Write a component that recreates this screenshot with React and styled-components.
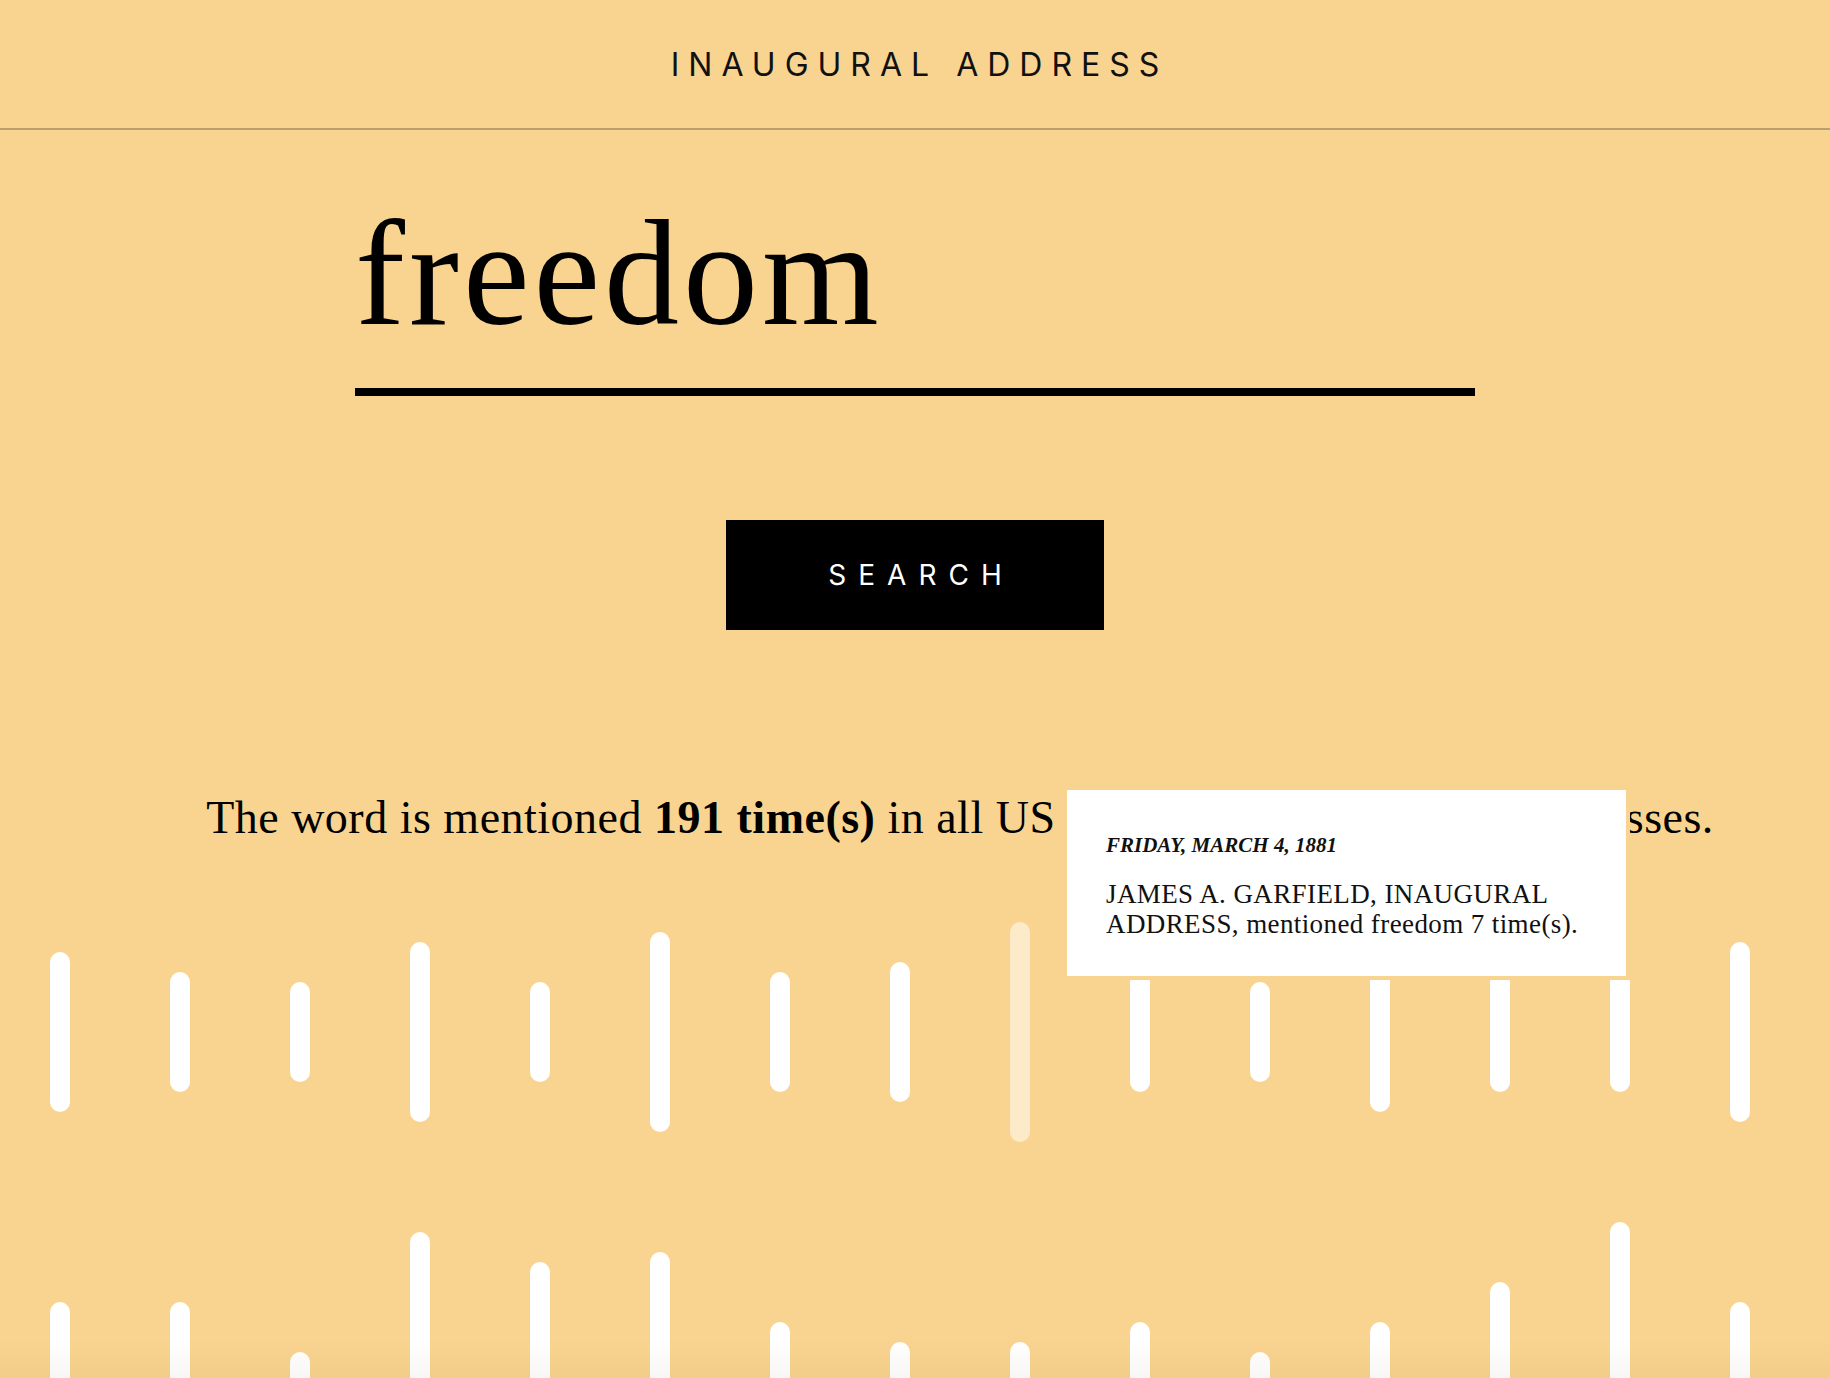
import styled, { createGlobalStyle } from "styled-components";

const GlobalStyle = createGlobalStyle`
  html, body {
    margin: 0;
    padding: 0;
    background: #f9d490;
    overflow: hidden;
  }
  * {
    box-sizing: border-box;
  }
`;

const Page = styled.div`
  width: 1830px;
  min-height: 1378px;
  background: #f9d490;
  color: #000;
`;

const Header = styled.header`
  height: 130px;
  display: flex;
  align-items: center;
  justify-content: center;
  border-bottom: 2px solid #b9a06c;
`;

const Title = styled.h1`
  margin: 0;
  padding-left: 9px;
  font-family: Inter, "Noto Sans", sans-serif;
  font-weight: 400;
  font-size: 32px;
  letter-spacing: 9px;
  color: #111;
`;

const Main = styled.main`
  display: flex;
  flex-direction: column;
  align-items: center;
`;

const SearchInput = styled.input`
  display: block;
  width: 1120px;
  height: 238px;
  margin-top: 28px;
  padding: 0;
  border: none;
  border-bottom: 8px solid #000;
  background: transparent;
  outline: none;
  font-family: "Liberation Serif", "Times New Roman", serif;
  font-size: 150px;
  letter-spacing: 4px;
  color: #000;
`;

const SearchButton = styled.button`
  width: 378px;
  height: 110px;
  margin-top: 124px;
  padding: 0 0 0 12px;
  border: none;
  background: #000;
  color: #fff;
  font-family: Inter, "Noto Sans", sans-serif;
  font-size: 28px;
  font-weight: 400;
  letter-spacing: 12px;
  cursor: pointer;
`;

const Summary = styled.p`
  margin: 160px 0 0;
  padding-left: 90px;
  line-height: 55px;
  font-family: "Liberation Serif", "Times New Roman", serif;
  font-size: 46px;
  letter-spacing: 0.5px;

  & strong {
    font-weight: 700;
  }
`;

const Wide = styled.span`
  letter-spacing: 1.9px;
`;

const Chart = styled.section`
  align-self: stretch;
  margin-top: 2px;
`;

const BarRow = styled.div`
  display: grid;
  grid-template-columns: repeat(15, 120px);
  height: 370px;
`;

const BarCell = styled.div`
  position: relative;
  display: flex;
  align-items: center;
  justify-content: center;
`;

const Bar = styled.div`
  width: 20px;
  border-radius: 10px;
  background: ${(p) => (p.$faded ? "rgba(255, 255, 255, 0.5)" : "#fff")};
`;

const Tooltip = styled.div`
  position: absolute;
  left: 107px;
  top: -57px;
  z-index: 2;
  width: 559px;
  height: 186px;
  padding: 43px 30px 0 39px;
  background: #fff;
  box-shadow: 0 0 0 4px #f9d490;
  font-family: "Liberation Serif", "Times New Roman", serif;
  color: #111;
`;

const TooltipDate = styled.div`
  font-size: 21px;
  font-weight: 700;
  font-style: italic;
  line-height: 24px;
`;

const TooltipBody = styled.div`
  margin-top: 22px;
  font-size: 27px;
  line-height: 30px;
  letter-spacing: 0.4px;
`;

const BottomFade = styled.div`
  position: fixed;
  left: 0;
  right: 0;
  bottom: 0;
  height: 40px;
  pointer-events: none;
  background: linear-gradient(rgba(0, 0, 0, 0), rgba(120, 90, 40, 0.05));
`;

const firstRow = [160, 120, 100, 180, 100, 200, 120, 140, 220, 120, 100, 160, 120, 120, 180];
const secondRow = [200, 200, 100, 340, 280, 300, 160, 120, 120, 160, 100, 160, 240, 360, 200];

const App = () => {
  return (
    <Page>
      <GlobalStyle />
      <Header>
        <Title>INAUGURAL ADDRESS</Title>
      </Header>
      <Main>
        <SearchInput type="text" defaultValue="freedom" readOnly />
        <SearchButton>SEARCH</SearchButton>
        <Summary>
          The word is mentioned <strong>191 time(s)</strong> in all US{" "}
          <Wide>presidential inaugural</Wide> addresses.
        </Summary>
        <Chart>
          <BarRow>
            {firstRow.map((h, i) => (
              <BarCell key={i}>
                <Bar $faded={i === 8} style={{ height: h }} />
                {i === 8 && (
                  <Tooltip>
                    <TooltipDate>FRIDAY, MARCH 4, 1881</TooltipDate>
                    <TooltipBody>
                      JAMES A. GARFIELD, INAUGURAL ADDRESS, mentioned freedom 7
                      time(s).
                    </TooltipBody>
                  </Tooltip>
                )}
              </BarCell>
            ))}
          </BarRow>
          <BarRow>
            {secondRow.map((h, i) => (
              <BarCell key={i}>
                <Bar style={{ height: h }} />
              </BarCell>
            ))}
          </BarRow>
        </Chart>
      </Main>
      <BottomFade />
    </Page>
  );
};

export default App;
